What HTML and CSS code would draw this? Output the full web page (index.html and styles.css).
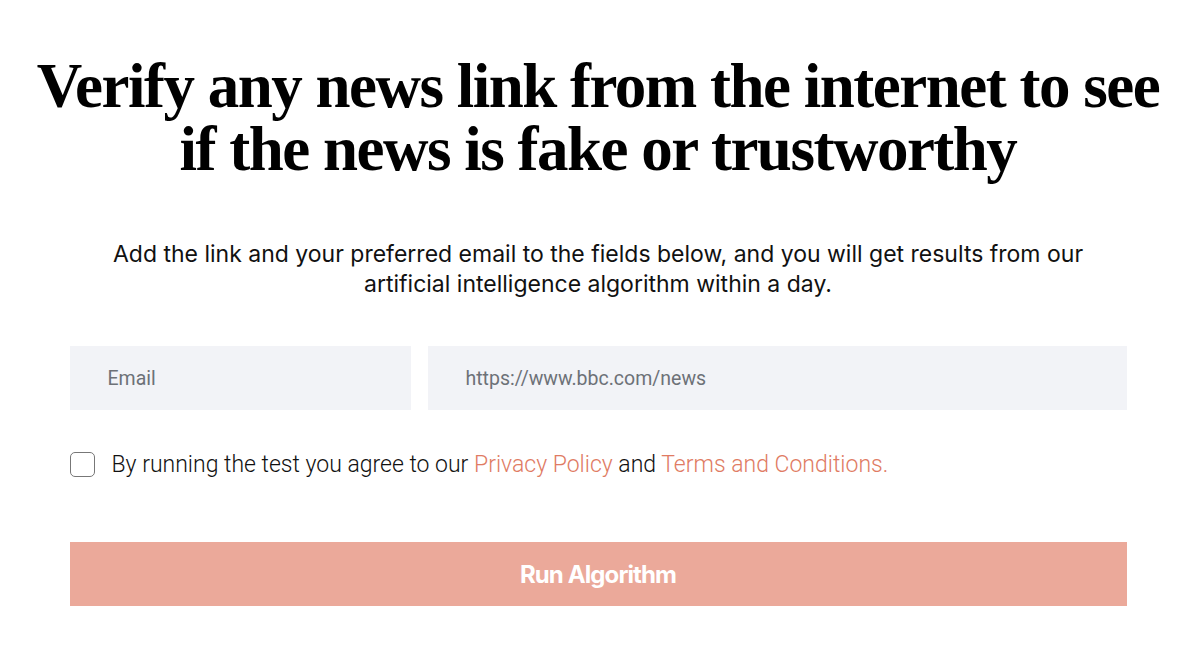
FILE: index.html
```html
<!DOCTYPE html>
<html lang="en">
<head>
<meta charset="utf-8">
<title>Verify news</title>
<link rel="stylesheet" href="styles.css">
</head>
<body>
<main class="page">
  <h1 class="title">Verify any news link from the internet to see<br>if the news is fake or trustworthy</h1>
  <p class="lead">Add the link and your preferred email to the fields below, and you will get results from our<br>artificial intelligence algorithm within a day.</p>
  <form class="form">
    <div class="fields">
      <input class="field field-email" type="text" placeholder="Email">
      <input class="field field-url" type="text" placeholder="https://www.bbc.com/news">
    </div>
    <label class="agree">
      <span class="box"></span>
      <span class="agree-text">By running the test you agree to our <a class="link" href="#">Privacy Policy</a> and <a class="link" href="#">Terms and Conditions.</a></span>
    </label>
    <button class="run" type="button">Run Algorithm</button>
  </form>
</main>
</body>
</html>
```
FILE: styles.css
```css
* { box-sizing: border-box; }
html, body { margin: 0; padding: 0; background: #fff; }
.page {
  width: 1057px;
  margin: 0 auto;
  display: flex;
  flex-direction: column;
  align-items: stretch;
}
.title {
  margin: 55px -60px 0;
  font-family: "Liberation Serif", "Times New Roman", serif;
  font-weight: 700;
  font-size: 63px;
  line-height: 63px;
  letter-spacing: -1.5px;
  text-align: center;
  color: #000;
}
.lead {
  margin: 58px 0 0;
  font-family: Inter, "Noto Sans", sans-serif;
  font-size: 23px;
  line-height: 30px;
  text-align: center;
  color: #111;
}
.form { margin-top: 47px; display: flex; flex-direction: column; }
.fields { display: flex; gap: 17px; }
.field {
  height: 64px;
  border: none;
  background: #f2f3f7;
  padding: 0 38px;
  font-family: Roboto, sans-serif;
  font-size: 19.5px;
  color: #333;
  outline: none;
}
.field::placeholder { color: #6d7177; }
.field-email { width: 341px; }
.field-url { flex: 1; }
.agree {
  margin-top: 42px;
  display: flex;
  align-items: center;
  gap: 17px;
  font-family: Roboto, sans-serif;
  font-size: 23px;
  font-weight: 300;
  line-height: 25px;
  color: #111;
}
.box {
  width: 25px;
  height: 25px;
  border: 1.5px solid #777;
  border-radius: 5px;
  flex: none;
}
.link { color: #e07b63; text-decoration: none; }
.run {
  margin-top: 65px;
  height: 64px;
  border: none;
  background: #eba99a;
  color: #fff;
  font-family: Inter, sans-serif;
  font-weight: 700;
  font-size: 24px;
  letter-spacing: -0.9px;
}
```
